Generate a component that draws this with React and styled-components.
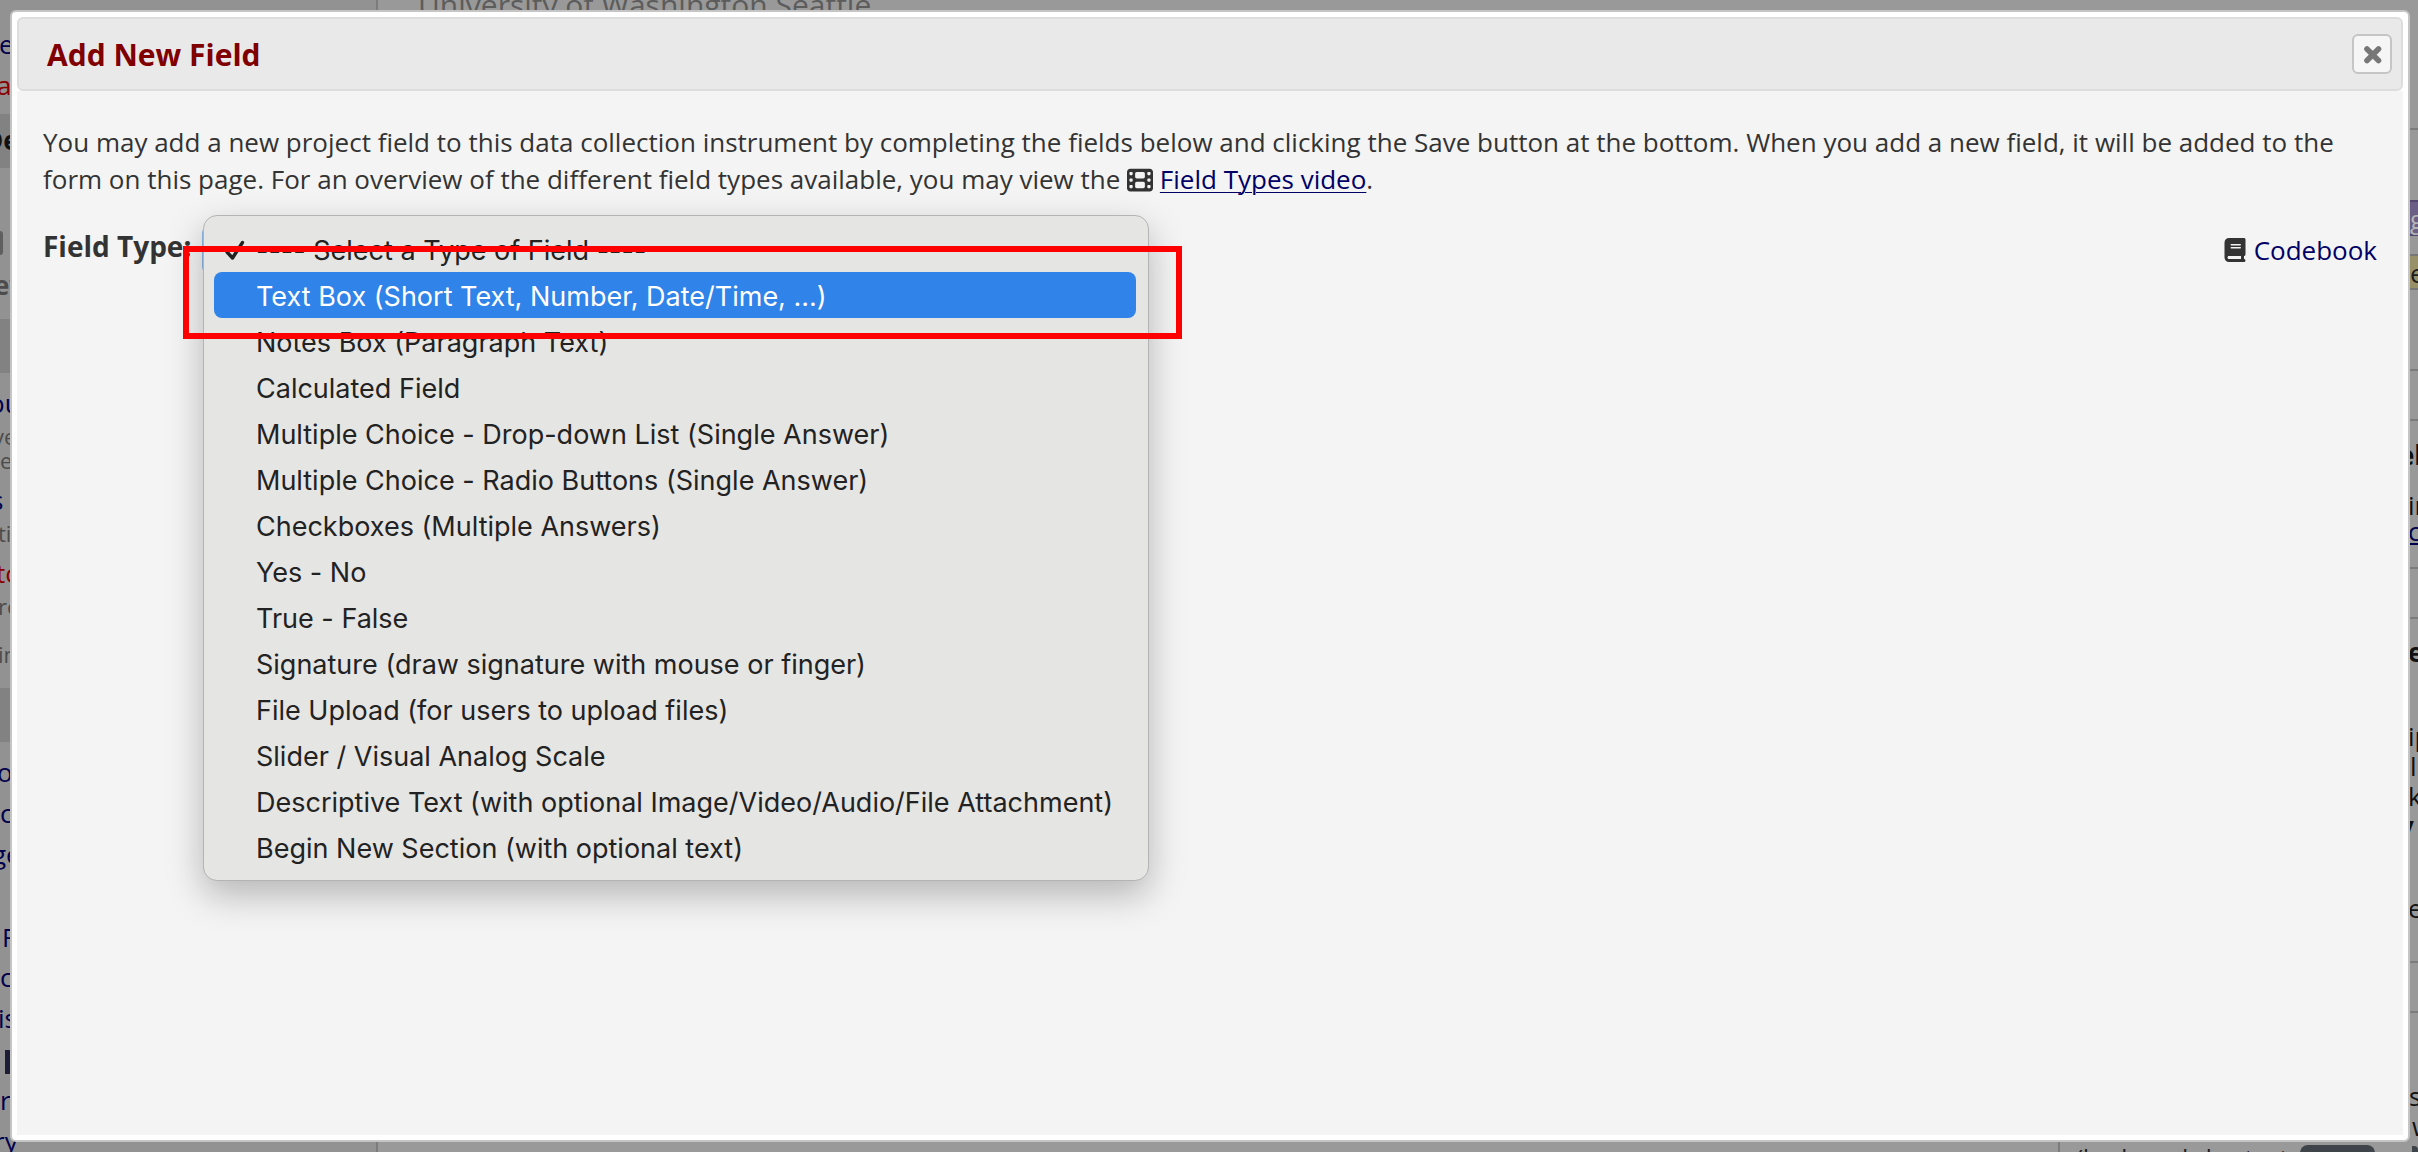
import React from "react";
import styled, { createGlobalStyle, css } from "styled-components";
import { FaFilm, FaBook } from "react-icons/fa6";

const GlobalStyle = createGlobalStyle`
  * { box-sizing: border-box; }
  body {
    margin: 0;
    background: #999999;
    color: #333333;
    font-family: "Open Sans", "Noto Sans", sans-serif;
    font-size: 26px;
  }
`;

/* ---------- dimmed page behind the dialog ---------- */

const Page = styled.div`
  display: flex;
  height: 100vh;
  overflow: hidden;
  background: #999999;
`;

const Sidebar = styled.aside`
  flex: 0 0 378px;
  display: flex;
  flex-direction: column;
  padding-top: 29px;
  overflow: hidden;
  background: #929292;
  border-right: 2px solid #7c7c7c;
`;

const Main = styled.main`
  flex: 1;
  min-width: 0;
  display: flex;
  flex-direction: column;
  justify-content: space-between;
  overflow: hidden;
`;

const Institution = styled.div`
  padding-left: 40px;
  margin-top: -10px;
  line-height: 30px;
  font-size: 30px;
  color: #5c5c5c;
`;

const Shortcuts = styled.div`
  align-self: flex-end;
  flex: none;
  display: flex;
  align-items: flex-start;
  gap: 6px;
  width: 352px;
  height: 12px;
  padding: 5px 0 0 16px;
  border-left: 2px solid #7c7c7c;
  font-size: 24px;
  line-height: 26px;
  white-space: nowrap;
  color: #1c1c1c;
`;

const Key = styled.kbd`
  width: 75px;
  height: 30px;
  border-radius: 8px;
  background: #3f444a;
`;

const Rail = styled.div`
  flex: 0 0 8px;
  display: flex;
  flex-direction: column;
  padding-top: 128px;
  overflow: hidden;
  color: #1c1c1c;
`;

const tones = {
  navy: "#00004d",
  red: "#8b0000",
  grey: "#4c4c4c",
  dark: "#111111",
};

const Line = styled.div`
  flex: none;
  margin-top: ${(p) => p.$gap || 0}px;
  text-indent: ${(p) => -(p.$cut || 0)}px;
  line-height: ${(p) => (p.$small ? 24 : p.$tight ? 26 : 30)}px;
  font-size: ${(p) => (p.$small ? 22 : 26)}px;
  font-weight: ${(p) => (p.$bold ? 700 : 400)};
  text-decoration: ${(p) => (p.$underline ? "underline" : "none")};
  white-space: nowrap;
  color: ${(p) => tones[p.$tone || "navy"]};
`;

const Band = styled(Line)`
  height: 54px;
  line-height: 52px;
  background: #828282;
`;

const Chip = styled.div`
  flex: none;
  width: ${(p) => p.$width}px;
  height: 24px;
  margin-top: ${(p) => p.$gap}px;
  margin-left: ${(p) => p.$indent || 0}px;
  border-radius: 0 4px 4px 0;
  background: ${(p) => p.$color};
`;

const Rule = styled.div`
  flex: none;
  height: 2px;
  margin-top: ${(p) => p.$gap || 0}px;
  background: #7c7c7c;
`;

const Tag = styled.div`
  flex: none;
  height: 36px;
  margin-top: ${(p) => p.$gap}px;
  line-height: 34px;
  border-top: 2px solid ${(p) => p.$edge};
  border-bottom: 2px solid ${(p) => p.$edge};
  background: ${(p) => p.$fill};
  color: ${(p) => p.$ink};
`;

/* ---------- dialog ---------- */

const Dialog = styled.section`
  position: fixed;
  inset: 10px 8px 10px 10px;
  display: flex;
  flex-direction: column;
  padding: 5px;
  border: 2px solid #c5c5c5;
  border-radius: 6px;
  background: #ffffff;
`;

const TitleBar = styled.header`
  flex: none;
  display: flex;
  align-items: center;
  justify-content: space-between;
  height: 74px;
  padding: 0 9px 0 28px;
  border: 2px solid #dddddd;
  border-radius: 6px;
  background: #e9e9e9;
`;

const Title = styled.h1`
  margin: 0;
  padding-top: 2px;
  font-size: 30px;
  line-height: 40px;
  font-weight: 700;
  color: #800000;
`;

const CloseButton = styled.button`
  display: flex;
  align-items: center;
  justify-content: center;
  width: 40px;
  height: 40px;
  padding: 0;
  border: 2px solid #c5c5c5;
  border-radius: 6px;
  background: #f6f6f6;
  color: #777777;
`;

const Content = styled.div`
  flex: 1;
  padding: 33px 26px;
  background: #f4f4f4;
`;

const Intro = styled.p`
  margin: 0;
  line-height: 37px;
  svg {
    vertical-align: -4px;
  }
`;

const Link = styled.a`
  color: #000066;
  text-decoration: ${(p) => (p.$plain ? "none" : "underline")};
  text-decoration-thickness: 1px;
  text-underline-offset: 3px;
`;

const FieldRow = styled.div`
  display: flex;
  align-items: flex-start;
  margin-top: 29px;
  line-height: 40px;
`;

const FieldLabel = styled.label`
  flex: 0 0 159px;
  font-size: 28px;
  line-height: 38px;
  font-weight: 700;
`;

const Picker = styled.div`
  position: relative;
  height: 46px;
`;

const TypeSelect = styled.select`
  width: 900px;
  height: 46px;
  border: 2px solid #8fb8e8;
  border-radius: 6px;
  background: #ffffff;
  font: inherit;
`;

const Codebook = styled.div`
  display: flex;
  align-items: center;
  gap: 7px;
  margin: 3px 0 0 auto;
`;

const Menu = styled.ul`
  position: absolute;
  top: -12px;
  left: 1px;
  width: 946px;
  margin: 0;
  padding: 10px 12px 10px 10px;
  list-style: none;
  border: 1px solid #b4b4b4;
  border-radius: 14px;
  background: #e5e5e4;
  box-shadow: 0 14px 36px rgba(0, 0, 0, 0.26);
  font-family: Inter, "Liberation Sans", sans-serif;
  font-size: 27px;
  font-variant-ligatures: no-contextual;
  color: #222222;
`;

const MenuItem = styled.li`
  display: flex;
  align-items: center;
  height: 46px;
  padding-top: 4px;
  line-height: 40px;
  border-radius: 8px;
  white-space: nowrap;
  ${(p) =>
    p.$active &&
    css`
      background: #3083e8;
      color: #ffffff;
    `}
`;

const Mark = styled.span`
  flex: 0 0 42px;
  display: flex;
  padding-left: 10px;
`;

const Highlight = styled.div`
  position: absolute;
  top: 19px;
  left: -19px;
  width: 999px;
  height: 93px;
  border: 6px solid #ff0000;
  pointer-events: none;
`;

const fieldTypes = [
  "---- Select a Type of Field ----",
  "Text Box (Short Text, Number, Date/Time, ...)",
  "Notes Box (Paragraph Text)",
  "Calculated Field",
  "Multiple Choice - Drop-down List (Single Answer)",
  "Multiple Choice - Radio Buttons (Single Answer)",
  "Checkboxes (Multiple Answers)",
  "Yes - No",
  "True - False",
  "Signature (draw signature with mouse or finger)",
  "File Upload (for users to upload files)",
  "Slider / Visual Analog Scale",
  "Descriptive Text (with optional Image/Video/Audio/File Attachment)",
  "Begin New Section (with optional text)",
];

const CheckMark = () => (
  <svg width="22" height="22" viewBox="0 0 22 22" aria-hidden="true">
    <path
      d="M3 12 L8.5 18 L18.5 2.5"
      fill="none"
      stroke="currentColor"
      strokeWidth="3.4"
      strokeLinecap="round"
      strokeLinejoin="round"
    />
  </svg>
);

const CrossMark = () => (
  <svg width="20" height="20" viewBox="0 0 20 20" aria-hidden="true">
    <path
      d="M5 5 L16.5 16.5 M16.5 5 L5 16.5"
      stroke="currentColor"
      strokeWidth="5.6"
      strokeLinecap="round"
    />
  </svg>
);

function Backdrop() {
  return (
    <Page aria-hidden="true">
      <Sidebar>
        <Line $cut={1}>e</Line>
        <Line $gap={11} $tone="red" $cut={3}>a</Line>
        <Band $gap={14} $tone="dark" $bold $cut={16}>De</Band>
        <Chip $gap={63} $width={3} $color="#5f5f5f" />
        <Line $gap={15} $tone="grey" $bold $cut={6}>ev</Line>
        <Band $gap={19} />
        <Line $gap={15} $cut={11}>ou</Line>
        <Line $gap={6} $small $tone="grey" $cut={7}>ve</Line>
        <Line $small $tone="grey" $cut={0}>e</Line>
        <Line $gap={13} $cut={9}>s</Line>
        <Line $gap={6} $small $tone="grey" $cut={2}>ti</Line>
        <Line $gap={13} $tone="red" $cut={4}>to</Line>
        <Line $gap={6} $small $tone="grey" $cut={2}>re</Line>
        <Line $gap={24} $small $tone="grey" $cut={2}>in</Line>
        <Band $gap={22} />
        <Line $gap={15} $cut={3}>o</Line>
        <Line $gap={11}>c</Line>
        <Line $gap={11} $cut={8}>ge</Line>
        <Line $gap={53} $cut={-2}>F</Line>
        <Line $gap={10} $cut={0}>c</Line>
        <Line $gap={11} $cut={2}>is</Line>
        <Chip $gap={17} $width={8} $indent={5} $color="#1d1d38" />
        <Line $gap={11} $cut={0}>r</Line>
        <Line $gap={11} $cut={6}>ry</Line>
      </Sidebar>
      <Main>
        <Institution>University of Washington Seattle</Institution>
        <Shortcuts>
          <span>(keyboard shortcut:</span>
          <Key />
        </Shortcuts>
      </Main>
      <Rail>
        <Rule />
        <Tag $gap={70} $edge="#54466f" $fill="#6b5f86" $ink="#b5b5b5">g</Tag>
        <Tag $gap={18} $edge="#777777" $fill="#979069" $ink="#1c1c1c">e</Tag>
        <Rule $gap={79} />
        <Rule $gap={48} />
        <Line $gap={19} $tone="dark" $bold $cut={11}>el</Line>
        <Line $gap={22} $tight $tone="dark" $cut={2}>in</Line>
        <Line $tight $underline $cut={2}>c</Line>
        <Rule $gap={23} />
        <Rule $gap={48} />
        <Line $gap={18} $tone="dark" $bold $cut={2}>e</Line>
        <Line $gap={54} $tone="dark" $cut={2}>ip</Line>
        <Line $tone="dark">l</Line>
        <Line $tone="dark" $cut={2}>k</Line>
        <Line $tone="dark" $bold $cut={11}>y</Line>
        <Line $gap={52} $tone="dark" $cut={2}>e</Line>
        <Rule $gap={38} />
        <Rule $gap={48} />
        <Line $gap={68} $tone="dark" $cut={1}>s</Line>
        <Line $tone="dark" $cut={-2}>w</Line>
        <Chip $gap={5} $width={6} $indent={2} $color="#3f444a" />
      </Rail>
    </Page>
  );
}

export default function App() {
  return (
    <>
      <GlobalStyle />
      <Backdrop />
      <Dialog role="dialog" aria-labelledby="dialog-title">
        <TitleBar>
          <Title id="dialog-title">Add New Field</Title>
          <CloseButton type="button" aria-label="Close">
            <CrossMark />
          </CloseButton>
        </TitleBar>
        <Content>
          <Intro>
            You may add a new project field to this data collection instrument
            by completing the fields below and clicking the Save button at the
            bottom. When you add a new field, it will be added to the form on
            this page. For an overview of the different field types available,
            you may view the <FaFilm size={26} />{" "}
            <Link href="#video">Field Types video</Link>.
          </Intro>
          <FieldRow>
            <FieldLabel htmlFor="field-type">Field Type:</FieldLabel>
            <Picker>
              <TypeSelect id="field-type">
                {fieldTypes.map((name) => (
                  <option key={name}>{name}</option>
                ))}
              </TypeSelect>
              <Menu role="listbox">
                {fieldTypes.map((name, i) => (
                  <MenuItem
                    key={name}
                    role="option"
                    aria-selected={i === 0}
                    $active={i === 1}
                  >
                    <Mark>{i === 0 && <CheckMark />}</Mark>
                    {name}
                  </MenuItem>
                ))}
              </Menu>
              <Highlight />
            </Picker>
            <Codebook>
              <FaBook size={24} />
              <Link href="#codebook" $plain>
                Codebook
              </Link>
            </Codebook>
          </FieldRow>
        </Content>
      </Dialog>
    </>
  );
}
